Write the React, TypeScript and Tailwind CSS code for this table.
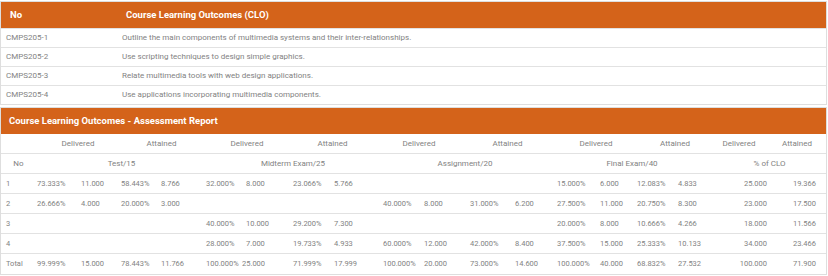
const orange = "bg-[#d4631a]"

const clos = [
  ["CMPS205-1", "Outline the main components of multimedia systems and their inter-relationships."],
  ["CMPS205-2", "Use scripting techniques to design simple graphics."],
  ["CMPS205-3", "Relate multimedia tools with web design applications."],
  ["CMPS205-4", "Use applications incorporating multimedia components."],
]

const rows = [
  ["1", "73.333%", "11.000", "58.443%", "8.766", "32.000%", "8.000", "23.066%", "5.766", "", "", "", "", "15.000%", "6.000", "12.083%", "4.833", "25.000", "19.366"],
  ["2", "26.666%", "4.000", "20.000%", "3.000", "", "", "", "", "40.000%", "8.000", "31.000%", "6.200", "27.500%", "11.000", "20.750%", "8.300", "23.000", "17.500"],
  ["3", "", "", "", "", "40.000%", "10.000", "29.200%", "7.300", "", "", "", "", "20.000%", "8.000", "10.666%", "4.266", "18.000", "11.566"],
  ["4", "", "", "", "", "28.000%", "7.000", "19.733%", "4.933", "60.000%", "12.000", "42.000%", "8.400", "37.500%", "15.000", "25.333%", "10.133", "34.000", "23.466"],
  ["Total", "99.999%", "15.000", "78.443%", "11.766", "100.000%", "25.000", "71.999%", "17.999", "100.000%", "20.000", "73.000%", "14.600", "100.000%", "40.000", "68.832%", "27.532", "100.000", "71.900"],
]

const sub = ["Delivered", "Attained", "Delivered", "Attained", "Delivered", "Attained", "Delivered", "Attained", "Delivered", "Attained"]
const groups = ["Test/15", "Midterm Exam/25", "Assignment/20", "Final Exam/40", "% of CLO"]

function CloTable() {
  return (
    <div className="border border-[#dedede] mt-px">
      <div className={`${orange} h-[26px] grid grid-cols-[116px_1fr] items-center text-white font-bold text-[9.5px]`}>
        <div className="pl-[9px]">No</div>
        <div className="pl-[9px]">Course Learning Outcomes (CLO)</div>
      </div>
      {clos.map(([code, text]) => (
        <div key={code} className="h-[19px] grid grid-cols-[116px_1fr] items-center border-t border-[#e2e2e2] text-[8px] text-[#828282]">
          <div className="pl-[5px]">{code}</div>
          <div className="pl-[5px]">{text}</div>
        </div>
      ))}
    </div>
  )
}

function ReportTable() {
  return (
    <div className="border border-[#dedede] mt-[2px]">
      <div className={`${orange} h-[26px] flex items-center pl-[8px] text-white font-bold text-[9.5px]`}>
        Course Learning Outcomes - Assessment Report
      </div>
      <div className="h-[20px] grid grid-cols-[36px_82px_85px_86px_85px_88px_89px_88px_70px_58px_1fr] items-center border-b border-[#e2e2e2] text-[8px] text-[#828282]">
        <div />
        {sub.map((s, i) => (
          <div key={i} className="text-center">{s}</div>
        ))}
      </div>
      <div className="h-[20px] grid grid-cols-[35px_171px_172px_172px_162px_1fr] items-center border-b border-[#e2e2e2] text-[8px] text-[#828282]">
        <div className="text-center">No</div>
        {groups.map((g) => (
          <div key={g} className="text-center">{g}</div>
        ))}
      </div>
      {rows.map((r, ri) => (
        <div
          key={ri}
          className={`h-[20px] grid grid-cols-[31px_44px_40px_40px_45px_40px_47px_41px_49px_41px_46px_45px_42px_43px_37px_41px_42px_57px_1fr] items-center text-[7.5px] text-[#828282] ${ri < rows.length - 1 ? "border-b border-[#e2e2e2]" : ""}`}
        >
          {r.map((v, i) => (
            <div
              key={i}
              className={
                i === 17
                  ? "text-right pr-[5px]"
                  : i === 18
                  ? "text-right pr-[10px]"
                  : i === 6 && ri === rows.length - 1
                  ? "pl-[5px] -ml-[4px] whitespace-nowrap"
                  : "pl-[5px] whitespace-nowrap"
              }
            >
              {v}
            </div>
          ))}
        </div>
      ))}
    </div>
  )
}

export default function App() {
  return (
    <div className="w-[828px] h-[276px] bg-white font-['Roboto',sans-serif] pr-px">
      <CloTable />
      <ReportTable />
    </div>
  )
}
